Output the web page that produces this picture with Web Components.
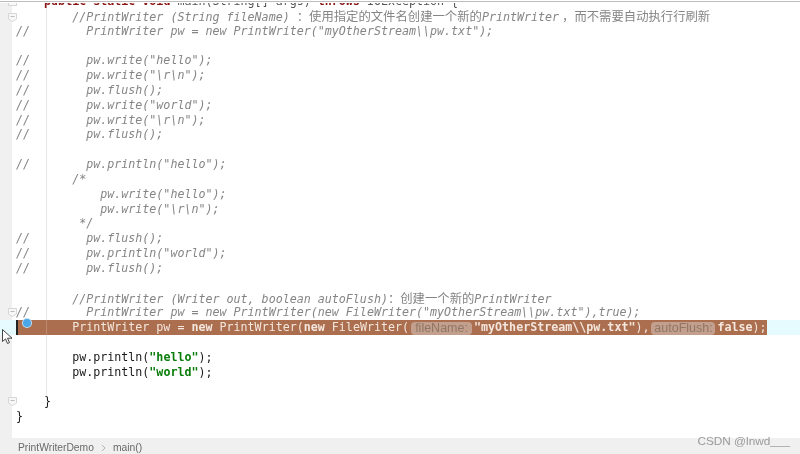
<!DOCTYPE html>
<html><head><meta charset="utf-8"><style>
html,body{margin:0;padding:0;background:#fff;overflow:hidden}
</style></head><body>
<ide-window></ide-window>
<script>
const LINES = [
 ['k','    <b>public static void</b> main(String[] args) <b>throws</b> IOException {'],
 ['c','        //PrintWriter (String fileName) <span class="z">：使用指定的文件名创建一个新的</span>PrintWriter<span class="z" style="padding-left:3px">，而不需要自动执行行刷新</span>'],
 ['c','//        PrintWriter pw = new PrintWriter("myOtherStream\\\\pw.txt");'],
 [''],
 ['c','//        pw.write("hello");'],
 ['c','//        pw.write("\\r\\n");'],
 ['c','//        pw.flush();'],
 ['c','//        pw.write("world");'],
 ['c','//        pw.write("\\r\\n");'],
 ['c','//        pw.flush();'],
 [''],
 ['c','//        pw.println("hello");'],
 ['c','        /*'],
 ['c','            pw.write("hello");'],
 ['c','            pw.write("\\r\\n");'],
 ['c','         */'],
 ['c','//        pw.flush();'],
 ['c','//        pw.println("world");'],
 ['c','//        pw.flush();'],
 [''],
 ['c','        //PrintWriter (Writer out, boolean autoFlush)<span class="z">：创建一个新的</span>PrintWriter'],
 ['c','//        PrintWriter pw = new PrintWriter(new FileWriter("myOtherStream\\\\pw.txt"),true);'],
 ['h','        PrintWriter pw = <b>new</b> PrintWriter(<b>new</b> FileWriter(<i class="hint" style="width:61px">fileName:</i><b>"myOtherStream\\\\pw.txt"</b>),<i class="hint" style="width:64px">autoFlush:</i><b>false</b>);'],
 [''],
 ['','        pw.println(<b class="s">"hello"</b>);'],
 ['','        pw.println(<b class="s">"world"</b>);'],
 [''],
 ['','    }'],
 ['','}']
];

class CodeLine extends HTMLElement{
  constructor(){super();
    this.attachShadow({mode:'open'}).innerHTML=`<style>
    :host{display:block;height:14.83px;white-space:pre;position:relative;
      font:11.66px/14.83px "DejaVu Sans Mono",monospace;color:#1a1a1a}
    :host([kind=c]){color:#858585;font-style:italic}
    :host([kind=h]){background:linear-gradient(90deg,#e6fbff 16px,#ab6f50 16px,#ab6f50 46px,#bb8a70 46px,#bb8a70 47px,#ab6f50 47px,#ab6f50 767px,#e6fbff 767px);color:#f4e6dc;margin-left:-16px;padding-left:16px;z-index:1}
    :host([kind=h])::before{content:"";position:absolute;left:16px;top:0;width:2px;height:100%;background:#222}
    </style><slot></slot>`;
  }
}
customElements.define('code-line',CodeLine);

class FoldMark extends HTMLElement{
  constructor(){super();
    this.attachShadow({mode:'open'}).innerHTML=`<style>
    :host{position:absolute;display:block;width:9px;height:9px}
    svg{display:block}
    </style><svg width="9" height="9" viewBox="0 0 9 9"><path d="M.5.5h8v5.5l-4 2.5-4-2.5z" fill="#f8f8f8" stroke="#d6d6d6"/><path d="M2.5 3.5h4" stroke="#bbb"/></svg>`;
  }
}
customElements.define('fold-mark',FoldMark);

class IdeWindow extends HTMLElement{
  constructor(){super();
    const inner=LINES.map(([k,t])=>`<code-line${k?` kind="${k}"`:''}>${t||' '}</code-line>`).join('');
    this.attachShadow({mode:'open'}).innerHTML=`<style>
    :host{display:flex;flex-direction:column;width:800px;height:454px;overflow:hidden;filter:blur(.55px);background:#fff;position:relative}
    .top{height:3px;flex:none;background:linear-gradient(#fff 1px,#bdbdbd 1px,#bdbdbd 2px,#fff 2px);position:relative;z-index:3}
    .main{flex:1;display:flex;min-height:0;position:relative;overflow:hidden}
    .gutter{width:12px;flex:none;background:#f0f0f0}
    .code{flex:1;position:relative;padding-left:4px}
    .lines{margin-top:-9px;position:relative;background:linear-gradient(90deg,transparent 30px,#e6e6e6 30px,#e6e6e6 31px,transparent 31px) no-repeat 0 0/100% 403px}
    b{font-weight:700}
    code-line[kind=k] b{color:#8a1414}
    code-line[kind=k]{color:#555}
    b.s{color:#0a7d0a}
    .z{font-family:"Noto Sans CJK SC",sans-serif;font-style:normal;font-size:12.35px}
    .hint{display:inline-block;box-sizing:border-box;font:12.5px/13px "Liberation Sans",sans-serif;font-style:normal;color:#917565;background:#c2a08d;border-radius:4px;height:13px;text-align:center;margin:0 2px;vertical-align:-1px}
    .crumbs{height:16px;box-sizing:border-box;flex:none;background:#f0f0f0;display:flex;align-items:center;gap:7px;padding:3px 0 0 18px;font:10.3px "Liberation Sans",sans-serif;color:#6a6a6a}
    .crumbs svg{display:block}
    .mark{position:absolute;right:10px;bottom:6px;font:11.8px "Liberation Sans",sans-serif;color:#9a9a9a}
    fold-mark{z-index:2}
    .bp{position:absolute;left:23px;top:319px;width:8px;height:8px;border-radius:50%;background:#4aa6e8;box-shadow:0 0 0 1px #bfe0f5;z-index:4}
    .cur{position:absolute;left:2px;top:329px;z-index:5}
    .stub{position:absolute;left:8px;top:0;width:9px;height:3px;background:#f8f8f8;border:solid #d6d6d6;border-width:0 1px 1px;box-sizing:border-box;z-index:2}
    </style>
    <div class="top"></div>
    <div class="main">
      <div class="gutter"></div>
      <div class="code"><div class="lines">${inner}</div></div>
      <div class="stub"></div>
      <fold-mark style="left:8px;top:10px"></fold-mark>
      <fold-mark style="left:8px;top:305px"></fold-mark>
      <fold-mark style="left:8px;top:394px"></fold-mark>
    </div>
    <div class="crumbs"><span>PrintWriterDemo</span><svg width="5" height="8" viewBox="0 0 5 8"><path d="M1 1l3 3-3 3" fill="none" stroke="#b5b5b5"/></svg><span>main()</span></div>
    <div class="bp"></div>
    <svg class="cur" width="11" height="16" viewBox="0 0 11 16"><path d="M.5.5v12l3-2.6 2 4.6 2-.9-2-4.4h4.5z" fill="#fff" stroke="#444"/></svg>
    <div class="mark">CSDN @lnwd___</div>`;
  }
}
customElements.define('ide-window',IdeWindow);
</script>
</body></html>
